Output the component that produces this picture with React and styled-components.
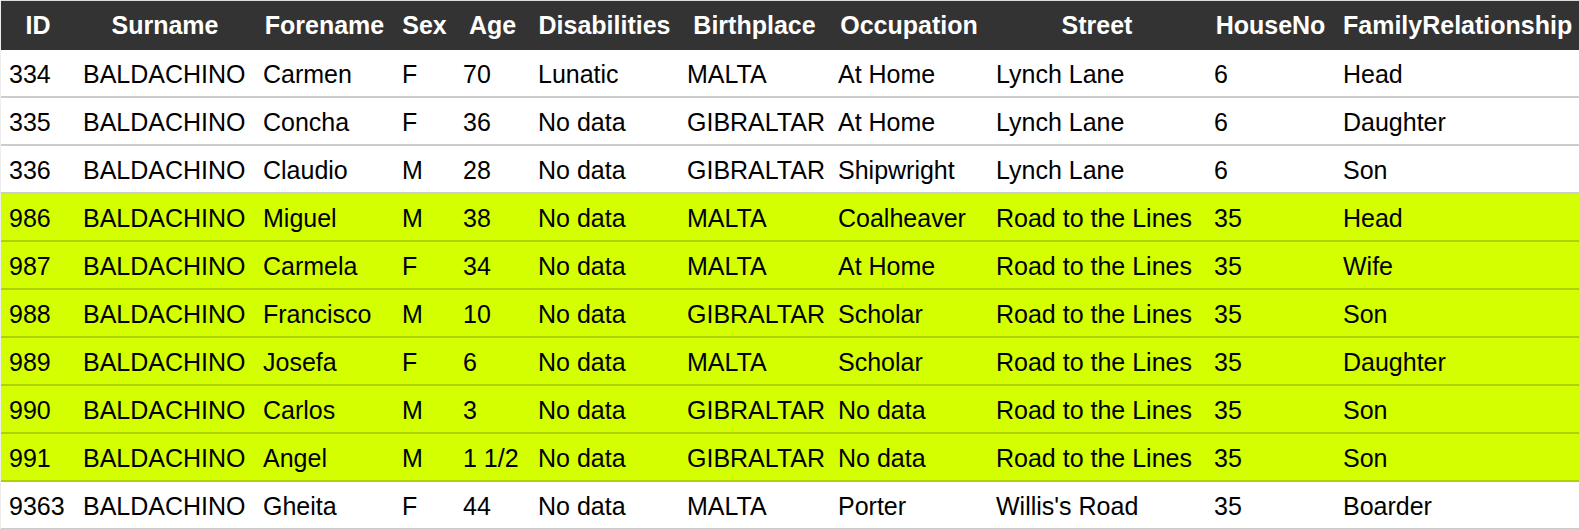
import styled, { createGlobalStyle } from "styled-components";

const GlobalStyle = createGlobalStyle`
    html, body {
        margin: 0;
        padding: 0;
        background: #efedeb;
    }
    body {
        font-family: "Liberation Sans", Arial, sans-serif;
    }
`

const Pagina = styled.div`
    padding: 0 0 0 1px;
`

const Tabela = styled.table`
    border-collapse: collapse;
    table-layout: fixed;
    width: 1578px;
    background: #fff;
    font-size: 25px;
    color: #000;
`

const Cabecalho = styled.th`
    background: #333333;
    color: #fff;
    font-weight: bold;
    text-align: center;
    height: 49px;
    padding: 0 8px;
    border-top: 1px solid #dcdcdc;
    white-space: nowrap;
    overflow: hidden;
`

const Linha = styled.tr`
    background: ${(props) => (props.$destaque ? "#d4ff00" : "#ffffff")};
    border-bottom: 2px solid ${(props) => (props.$destaque ? "#afd100" : "#cccccc")};
`

const Celula = styled.td`
    height: 43px;
    padding: 3px 8px 0 8px;
    text-align: left;
    vertical-align: middle;
    white-space: nowrap;
    overflow: hidden;
`

const colunas = [
    { nome: "ID", largura: 74 },
    { nome: "Surname", largura: 180 },
    { nome: "Forename", largura: 139 },
    { nome: "Sex", largura: 61 },
    { nome: "Age", largura: 75 },
    { nome: "Disabilities", largura: 149 },
    { nome: "Birthplace", largura: 151 },
    { nome: "Occupation", largura: 158 },
    { nome: "Street", largura: 218 },
    { nome: "HouseNo", largura: 129 },
    { nome: "FamilyRelationship", largura: 244 },
]

const linhas = [
    { destaque: false, dados: ["334", "BALDACHINO", "Carmen", "F", "70", "Lunatic", "MALTA", "At Home", "Lynch Lane", "6", "Head"] },
    { destaque: false, dados: ["335", "BALDACHINO", "Concha", "F", "36", "No data", "GIBRALTAR", "At Home", "Lynch Lane", "6", "Daughter"] },
    { destaque: false, dados: ["336", "BALDACHINO", "Claudio", "M", "28", "No data", "GIBRALTAR", "Shipwright", "Lynch Lane", "6", "Son"] },
    { destaque: true, dados: ["986", "BALDACHINO", "Miguel", "M", "38", "No data", "MALTA", "Coalheaver", "Road to the Lines", "35", "Head"] },
    { destaque: true, dados: ["987", "BALDACHINO", "Carmela", "F", "34", "No data", "MALTA", "At Home", "Road to the Lines", "35", "Wife"] },
    { destaque: true, dados: ["988", "BALDACHINO", "Francisco", "M", "10", "No data", "GIBRALTAR", "Scholar", "Road to the Lines", "35", "Son"] },
    { destaque: true, dados: ["989", "BALDACHINO", "Josefa", "F", "6", "No data", "MALTA", "Scholar", "Road to the Lines", "35", "Daughter"] },
    { destaque: true, dados: ["990", "BALDACHINO", "Carlos", "M", "3", "No data", "GIBRALTAR", "No data", "Road to the Lines", "35", "Son"] },
    { destaque: true, dados: ["991", "BALDACHINO", "Angel", "M", "1 1/2", "No data", "GIBRALTAR", "No data", "Road to the Lines", "35", "Son"] },
    { destaque: false, dados: ["9363", "BALDACHINO", "Gheita", "F", "44", "No data", "MALTA", "Porter", "Willis's Road", "35", "Boarder"] },
]

const App = () => {
    return (
        <Pagina>
            <GlobalStyle />
            <Tabela>
                <colgroup>
                    {colunas.map((c) => (
                        <col key={c.nome} style={{ width: c.largura }} />
                    ))}
                </colgroup>
                <thead>
                    <tr>
                        {colunas.map((c) => (
                            <Cabecalho key={c.nome}>{c.nome}</Cabecalho>
                        ))}
                    </tr>
                </thead>
                <tbody>
                    {linhas.map((l) => (
                        <Linha key={l.dados[0]} $destaque={l.destaque}>
                            {l.dados.map((d, i) => (
                                <Celula key={i}>{d}</Celula>
                            ))}
                        </Linha>
                    ))}
                </tbody>
            </Tabela>
        </Pagina>
    )
}

export default App
